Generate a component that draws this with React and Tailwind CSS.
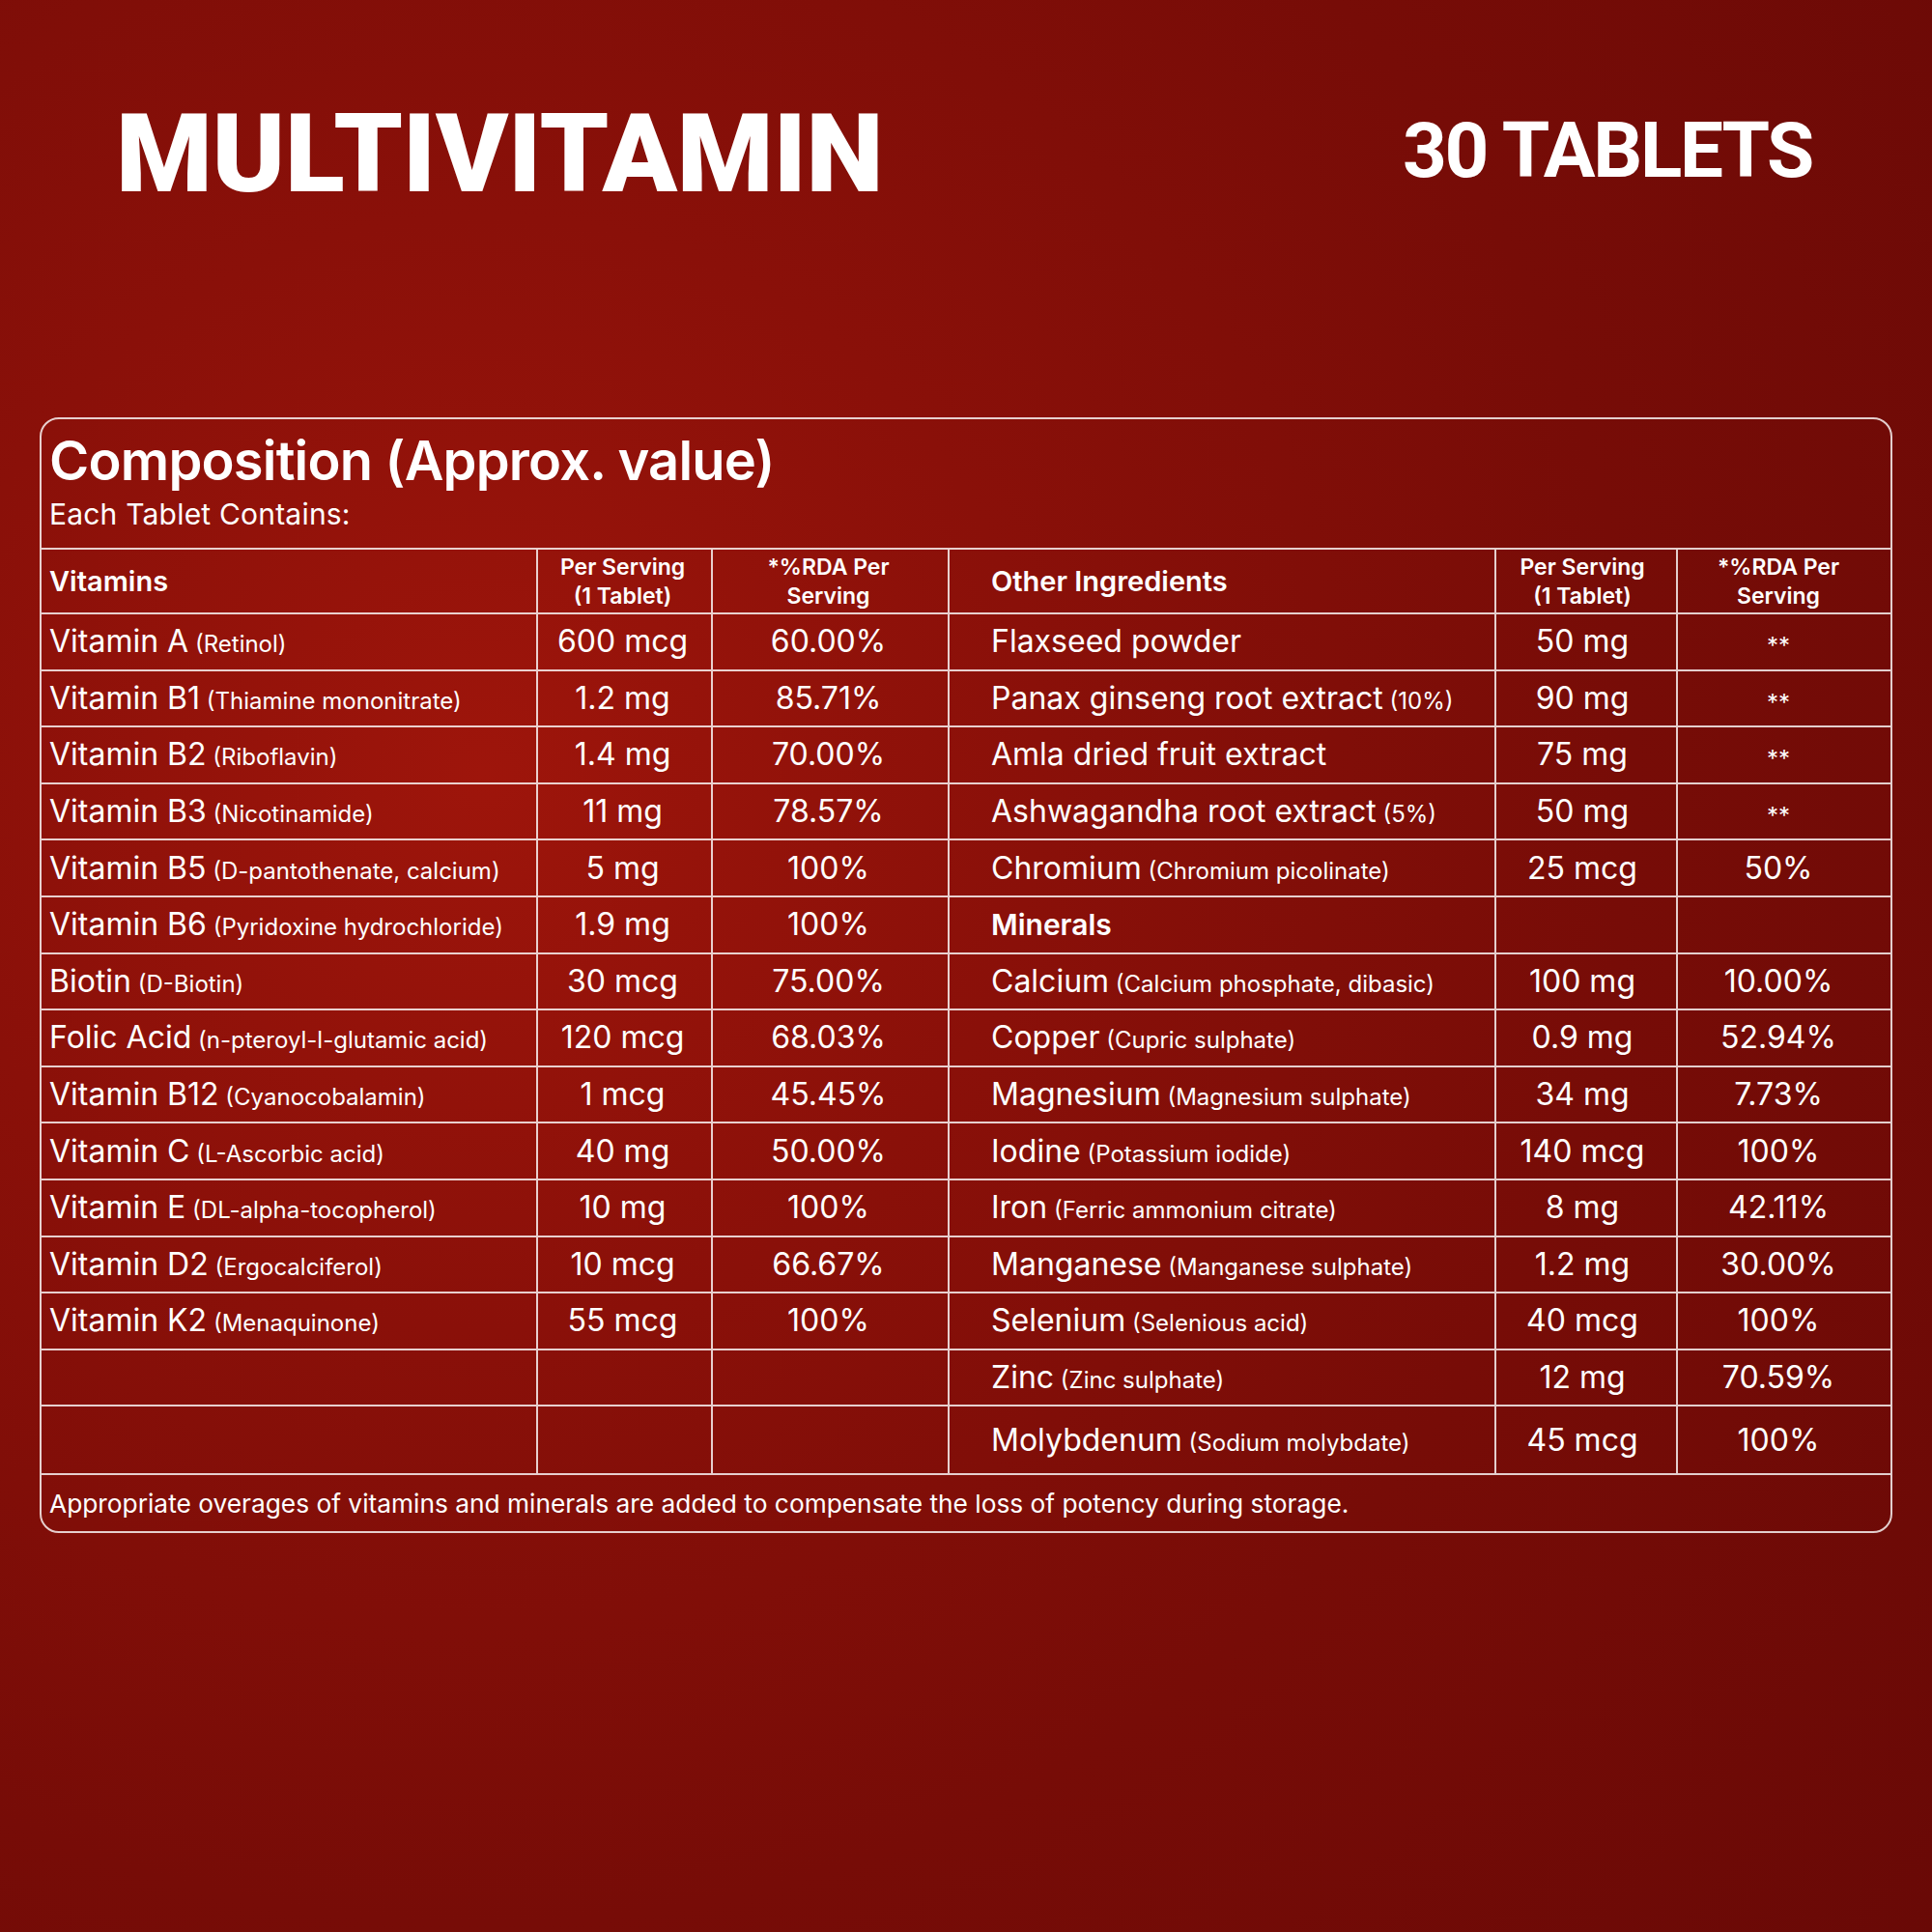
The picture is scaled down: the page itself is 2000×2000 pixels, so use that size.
import React from "react";

const left = [
  ["Vitamin A", "(Retinol)", "600 mcg", "60.00%"],
  ["Vitamin B1", "(Thiamine mononitrate)", "1.2 mg", "85.71%"],
  ["Vitamin B2", "(Riboflavin)", "1.4 mg", "70.00%"],
  ["Vitamin B3", "(Nicotinamide)", "11 mg", "78.57%"],
  ["Vitamin B5", "(D-pantothenate, calcium)", "5 mg", "100%"],
  ["Vitamin B6", "(Pyridoxine hydrochloride)", "1.9 mg", "100%"],
  ["Biotin", "(D-Biotin)", "30 mcg", "75.00%"],
  ["Folic Acid", "(n-pteroyl-l-glutamic acid)", "120 mcg", "68.03%"],
  ["Vitamin B12", "(Cyanocobalamin)", "1 mcg", "45.45%"],
  ["Vitamin C", "(L-Ascorbic acid)", "40 mg", "50.00%"],
  ["Vitamin E", "(DL-alpha-tocopherol)", "10 mg", "100%"],
  ["Vitamin D2", "(Ergocalciferol)", "10 mcg", "66.67%"],
  ["Vitamin K2", "(Menaquinone)", "55 mcg", "100%"],
  null,
  null,
];

const right = [
  ["Flaxseed powder", "", "50 mg", "**"],
  ["Panax ginseng root extract", "(10%)", "90 mg", "**"],
  ["Amla dried fruit extract", "", "75 mg", "**"],
  ["Ashwagandha root extract", "(5%)", "50 mg", "**"],
  ["Chromium", "(Chromium picolinate)", "25 mcg", "50%"],
  "Minerals",
  ["Calcium", "(Calcium phosphate, dibasic)", "100 mg", "10.00%"],
  ["Copper", "(Cupric sulphate)", "0.9 mg", "52.94%"],
  ["Magnesium", "(Magnesium sulphate)", "34 mg", "7.73%"],
  ["Iodine", "(Potassium iodide)", "140 mcg", "100%"],
  ["Iron", "(Ferric ammonium citrate)", "8 mg", "42.11%"],
  ["Manganese", "(Manganese sulphate)", "1.2 mg", "30.00%"],
  ["Selenium", "(Selenious acid)", "40 mcg", "100%"],
  ["Zinc", "(Zinc sulphate)", "12 mg", "70.59%"],
  ["Molybdenum", "(Sodium molybdate)", "45 mcg", "100%"],
];

function Name({ main, sub }) {
  return (
    <span className="whitespace-nowrap">
      <span className="text-[32px]">{main}</span>
      {sub ? <span className="text-[24px]"> {sub}</span> : null}
    </span>
  );
}

function Row({ l, r, last }) {
  const h = last ? "h-[71px]" : "h-[58.6px]";
  const base = `${h} border-t-2 border-white/80 flex items-center`;
  const mid = `${base} border-l-2 justify-center text-[32px]`;
  const isHead = typeof r === "string";
  const stars = !isHead && r[3] === "**";
  return (
    <>
      <div className={`${base} pl-[8px]`}>{l ? <Name main={l[0]} sub={l[1]} /> : null}</div>
      <div className={`${mid} pr-[4px]`}>{l ? l[2] : ""}</div>
      <div className={`${mid} pr-[4px]`}>{l ? l[3] : ""}</div>
      <div className={`${base} border-l-2 pl-[43px]`}>
        {isHead ? <span className="text-[30px] font-semibold">{r}</span> : <Name main={r[0]} sub={r[1]} />}
      </div>
      <div className={`${mid} pr-[8px]`}>{isHead ? "" : r[2]}</div>
      <div className={`${mid} pr-[12px]`}>
        {isHead ? "" : stars ? <span className="text-[24px] translate-y-[5px]">**</span> : r[3]}
      </div>
    </>
  );
}

export default function App() {
  const head = "h-[67px] border-t-2 border-white/80 flex items-center";
  const headMid = `${head} border-l-2 justify-center text-center text-[23px] font-semibold leading-[30px]`;
  return (
    <div
      className="w-[2000px] h-[2000px] text-white bg-[radial-gradient(circle_at_25%_40%,#9e150b_0%,#8a1009_30%,#770c07_62%,#690906_100%)]"
      style={{ fontFamily: "Inter, 'Noto Sans', sans-serif" }}
    >
      <div className="flex items-center justify-between pl-[120px] pr-[124px] pt-[102px]">
        <div
          className="text-[114px] leading-none font-black tracking-[-0.3px]"
          style={{ fontFamily: "Roboto, 'Liberation Sans', sans-serif" }}
        >
          MULTIVITAMIN
        </div>
        <div
          className="text-[80px] leading-none font-bold tracking-[-2.3px] mb-[6px]"
          style={{ fontFamily: "Roboto, 'Liberation Sans', sans-serif" }}
        >
          30 TABLETS
        </div>
      </div>

      <div className="px-[41px] mt-[216px]">
        <div className="border-2 border-white/80 rounded-[20px]">
          <div className="h-[133px] pl-[8px] pt-[15px]">
            <div className="text-[56px] leading-none font-semibold tracking-[-0.8px]">
              Composition (Approx. value)
            </div>
            <div className="text-[30px] leading-none mt-[12px] tracking-[0.2px]">Each Tablet Contains:</div>
          </div>

          <div className="grid grid-cols-[512px_181px_245px_566px_188px_1fr]">
            <div className={`${head} pl-[8px] text-[29px] font-semibold`}>Vitamins</div>
            <div className={`${headMid} pr-[4px]`}>
              Per Serving
              <br />
              (1 Tablet)
            </div>
            <div className={`${headMid} pr-[4px]`}>
              *%RDA Per
              <br />
              Serving
            </div>
            <div className={`${head} border-l-2 pl-[43px] text-[29px] font-semibold`}>Other Ingredients</div>
            <div className={`${headMid} pr-[8px]`}>
              Per Serving
              <br />
              (1 Tablet)
            </div>
            <div className={`${headMid} pr-[12px]`}>
              *%RDA Per
              <br />
              Serving
            </div>

            {right.map((r, i) => (
              <Row key={i} l={left[i]} r={r} last={i === right.length - 1} />
            ))}
          </div>

          <div className="h-[60px] border-t-2 border-white/80 flex items-center pl-[8px] text-[26.3px]">
            Appropriate overages of vitamins and minerals are added to compensate the loss of potency during storage.
          </div>
        </div>
      </div>
    </div>
  );
}
